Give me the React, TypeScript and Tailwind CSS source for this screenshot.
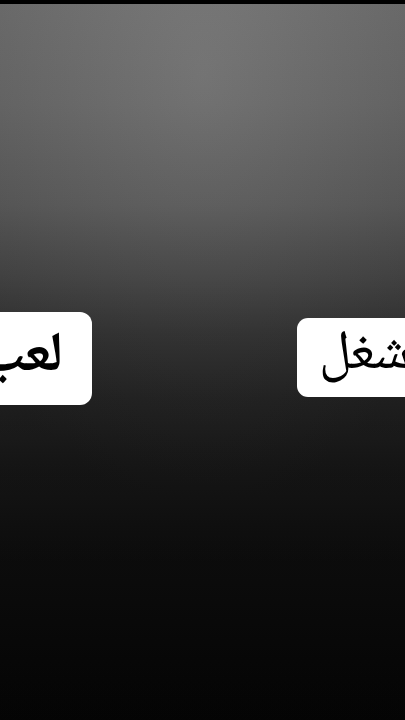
export default function App() {
  return (
    <div className="h-[720px] w-full overflow-hidden bg-black pt-[4px]">
      <div className="relative flex h-[716px] w-full items-start justify-between overflow-hidden bg-[linear-gradient(to_bottom,#717171_0%,#6a6a6a_14%,#5c5c5c_28%,#474747_38%,#333333_46%,#232323_55%,#171717_65%,#0d0d0d_78%,#050505_100%)]">
        <div className="pointer-events-none absolute inset-0 bg-[radial-gradient(ellipse_70%_60%_at_50%_10%,rgba(255,255,255,0.05),rgba(0,0,0,0.12)_100%)]" />
        <div
          dir="rtl"
          className="relative -ml-[58px] mt-[308px] flex h-[93px] w-[150px] shrink-0 items-center rounded-[12px] bg-white pr-[29px] font-['Noto_Naskh_Arabic','DejaVu_Sans',serif] text-[56px] font-bold leading-none text-black"
        >
          لعب
        </div>
        <div
          dir="rtl"
          className="relative -mr-[42px] mt-[314px] flex h-[79px] w-[150px] shrink-0 items-center justify-end overflow-hidden rounded-[11px] bg-white pb-[2px] pl-[22px] font-['Noto_Naskh_Arabic','DejaVu_Sans',serif] text-[55px] leading-none text-black"
        >
          <span className="whitespace-nowrap">شغل</span>
        </div>
      </div>
    </div>
  );
}
